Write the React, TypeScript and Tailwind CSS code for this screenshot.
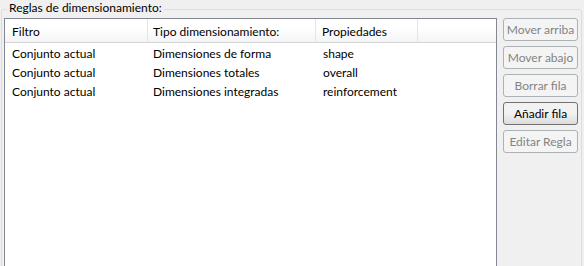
import React from 'react';

const rows = [
  { filtro: 'Conjunto actual', tipo: 'Dimensiones de forma', props: 'shape' },
  { filtro: 'Conjunto actual', tipo: 'Dimensiones totales', props: 'overall' },
  { filtro: 'Conjunto actual', tipo: 'Dimensiones integradas', props: 'reinforcement' },
];

const buttons = [
  { label: 'Mover arriba', enabled: false },
  { label: 'Mover abajo', enabled: false },
  { label: 'Borrar fila', enabled: false },
  { label: 'Añadir fila', enabled: true },
  { label: 'Editar Regla', enabled: false },
];

export default function App() {
  return (
    <div className="w-[584px] h-[266px] overflow-hidden bg-[#f0f0f0] text-[12px] leading-[15px] text-black [font-family:Lato,sans-serif]">
      <div className="relative pt-[9px] pl-[1px] pr-[2px]">
        <span className="absolute left-[7px] top-[0px] bg-[#f0f0f0] px-[2px] text-[#000]">
          Reglas de dimensionamiento:
        </span>
        <div className="h-[300px] rounded-[3px] border border-[#d5dfe5] flex pt-[8px] pl-[2px]">
          {/* table */}
          <div className="w-[493px] h-[290px] border border-[#828790] bg-white">
            <div className="flex h-[24px] border-b border-[#d5d5d5] bg-gradient-to-b from-white from-40% to-[#f3f4f6]">
              <div className="w-[143px] border-r border-[#e3e5e8] pl-[7px] pt-[5px]">Filtro</div>
              <div className="w-[168px] border-r border-[#e3e5e8] pl-[5px] pt-[5px]">Tipo dimensionamiento:</div>
              <div className="w-[102px] border-r border-[#e3e5e8] pl-[6px] pt-[5px]">Propiedades</div>
              <div className="flex-1" />
            </div>
            <div className="pt-[1px]">
              {rows.map((r, i) => (
                <div key={i} className="flex h-[19px] items-center">
                  <div className="w-[143px] pl-[7px]">{r.filtro}</div>
                  <div className="w-[169px] pl-[5px]">{r.tipo}</div>
                  <div className="pl-[6px]">{r.props}</div>
                </div>
              ))}
            </div>
          </div>
          {/* buttons */}
          <div className="flex flex-col gap-[5px] pl-[6px]">
            {buttons.map((b) => (
              <div
                key={b.label}
                className={
                  b.enabled
                    ? 'w-[75px] h-[23px] rounded-[3px] border border-[#707070] bg-gradient-to-b from-[#f2f2f2] from-50% to-[#dcdcdc] flex items-center justify-center text-black'
                    : 'w-[75px] h-[23px] rounded-[3px] border border-[#adb2b5] bg-[#f4f4f4] flex items-center justify-center text-[#838383]'
                }
              >
                {b.label}
              </div>
            ))}
          </div>
        </div>
      </div>
    </div>
  );
}
